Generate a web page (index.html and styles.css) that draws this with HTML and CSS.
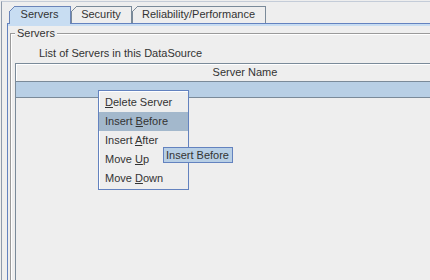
FILE: index.html
```html
<!DOCTYPE html>
<html lang="en">
<head>
  <meta charset="UTF-8">
  <title>DataSource Servers</title>
  <link rel="stylesheet" href="styles.css">
</head>
<body>
  <div class="frame">
    <div class="tabpane">
      <!-- Tab strip -->
      <div class="tabs">
        <div class="tab tab-selected tab-servers">Servers</div>
        <div class="tab tab-security">Security</div>
        <div class="tab tab-reliability">Reliability/Performance</div>
      </div>

      <!-- Tab content -->
      <div class="tab-content">
        <div class="content-band">
          <div class="group">
            <div class="group-title">Servers</div>
            <div class="group-label">List of Servers in this DataSource</div>
            <div class="scroll-pane">
              <div class="table-header">Server Name</div>
              <div class="table-row table-row-selected"></div>
            </div>
          </div>
        </div>
      </div>
    </div>
  </div>

  <!-- Context menu -->
  <div class="popup">
    <div class="popup-item"><u>D</u>elete Server</div>
    <div class="popup-item popup-item-active">Insert <u>B</u>efore</div>
    <div class="popup-item">Insert <u>A</u>fter</div>
    <div class="popup-item">Move <u>U</u>p</div>
    <div class="popup-item">Move <u>D</u>own</div>
  </div>

  <div class="tooltip">Insert Before</div>
</body>
</html>
```

FILE: styles.css
```css
* { box-sizing: border-box; }
html, body {
  margin: 0;
  height: 280px;
  overflow: hidden;
}
body {
  position: relative;
  background: #eeeeee;
  font-family: 'Liberation Sans', Arial, sans-serif;
  font-size: 11px;
  color: #333333;
}
.frame {
  margin: 1px 0 0 1px;
  height: 279px;
  border-left: 1px solid #8e9aab;
  border-top: 1px solid #c4ccd8;
}
.tabpane {
  padding: 4px 0 0 5px;
}
/* Tabs with the slanted top-left corner */
.tabs {
  display: flex;
  align-items: flex-start;
  height: 17px;
  padding-left: 2px;
}
.tab {
  height: 17px;
  line-height: 17px;
  text-align: center;
  border-right: 1px solid #7a8a99;
  background:
    linear-gradient(#7a8a99, #7a8a99) 6px 0 / 100% 1px no-repeat,
    linear-gradient(#7a8a99, #7a8a99) 0 6px / 1px 100% no-repeat,
    linear-gradient(135deg, transparent 3.9px, #7a8a99 3.9px, #7a8a99 4.6px, #eeeeee 4.6px);
}
.tab-selected {
  position: relative;
  z-index: 1;
  height: 18px;
  border-right-color: #6a84b8;
  background:
    linear-gradient(#6a84b8, #6a84b8) 6px 0 / 100% 1px no-repeat,
    linear-gradient(#6a84b8, #6a84b8) 0 6px / 1px 100% no-repeat,
    linear-gradient(135deg, transparent 3.9px, #6a84b8 3.9px, #6a84b8 4.6px, #c8ddf2 4.6px);
}
.tab-servers { width: 62px; }
.tab-security { width: 61px; }
.tab-reliability { width: 134px; }

.tab-content {
  border-top: 1px solid #6382bf;
  border-left: 1px solid #6382bf;
}
.content-band {
  border-top: 2px solid #c8ddf2;
  padding: 7px 0 0 2px;
}
/* Etched titled border */
.group {
  height: 247px;
  border-left: 1px solid #9a9a9a;
  border-top: 1px solid #9a9a9a;
  box-shadow: inset 1px 1px 0 #ffffff;
}
.group-title {
  width: max-content;
  margin: -8px 0 0 4px;
  padding: 0 2px;
  line-height: 15px;
  background: #eeeeee;
}
.group-label {
  margin-top: 5px;
  padding-left: 28px;
  line-height: 15px;
}
.scroll-pane {
  margin: 2px 0 0 4px;
  height: 217px;
  border-left: 1px solid #7a8a99;
  border-top: 1px solid #7a8a99;
}
.table-header {
  height: 18px;
  padding-left: 44px;
  line-height: 17px;
  text-align: center;
  border-bottom: 1px solid #7a8a99;
  box-shadow: inset 1px 1px 0 #ffffff;
}
.table-row {
  height: 16px;
  border-bottom: 1px solid #7a8a99;
}
.table-row-selected {
  background: #b8cfe5;
}

/* Popup menu and tooltip float over the table */
.popup {
  position: absolute;
  left: 98px;
  top: 90px;
  width: 91px;
  padding: 2px 0 1px;
  border: 1px solid #6382bf;
  background: #eeeeee;
  box-shadow: inset 1px 1px 0 #ffffff;
}
.popup-item {
  height: 19px;
  line-height: 19px;
  padding-left: 6px;
}
.popup-item-active {
  background: #a3b8cc;
}
.tooltip {
  position: absolute;
  left: 163px;
  top: 147px;
  height: 16px;
  padding: 0 3px 0 2px;
  line-height: 14px;
  border: 1px solid #6382bf;
  background: #b8cfe5;
}
```
